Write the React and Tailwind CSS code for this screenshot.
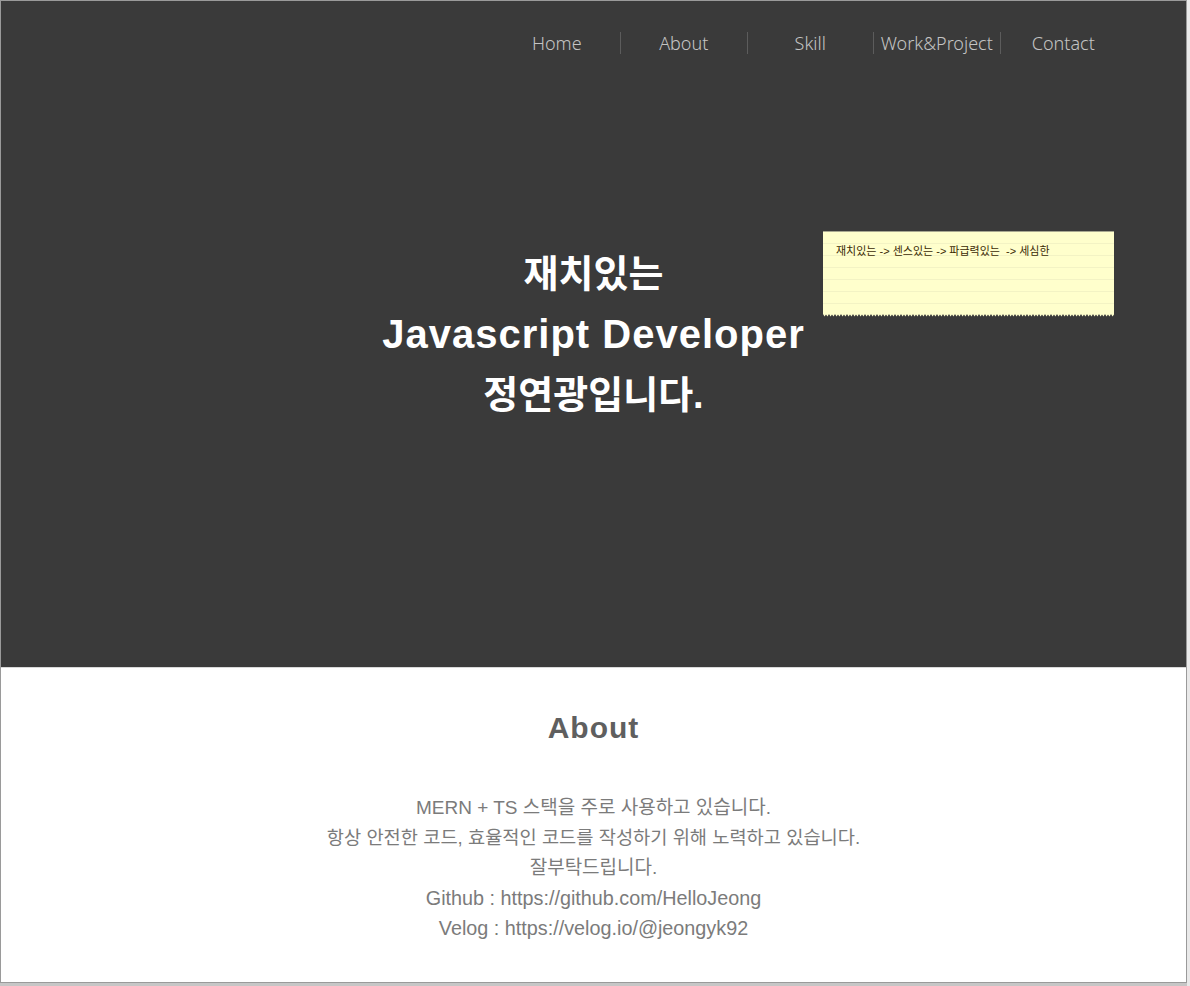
import React from 'react';

const navItems = ['Home', 'About', 'Skill', 'Work&Project', 'Contact'];

function Note() {
  return (
    <div className="absolute left-[822px] top-[230px] w-[291px]">
      <div className="h-[82px] border-t border-[#a8a890] bg-[#ffffcc] bg-[repeating-linear-gradient(to_bottom,transparent_0px,transparent_11px,#f3f3c4_11px,#f3f3c4_12px)] px-[13px] pt-[12px] text-[11px] leading-[14px] text-[#3b2a05] font-['Liberation_Sans','Noto_Sans_CJK_KR',sans-serif]">
        재치있는 -&gt; 센스있는 -&gt; 파급력있는 &nbsp;-&gt; 세심한
      </div>
      <svg width="291" height="4" viewBox="0 0 291 4" className="block">
        <defs>
          <pattern id="zig" width="6" height="4" patternUnits="userSpaceOnUse">
            <path d="M0 0 H6 V1 L4.5 3.5 L3 1.5 L1.5 3.5 L0 1 Z" fill="#ffffcc" />
          </pattern>
        </defs>
        <rect width="291" height="4" fill="url(#zig)" />
      </svg>
    </div>
  );
}

export default function App() {
  return (
    <div className="w-[1190px] h-[986px] bg-[#e9e9e9] overflow-hidden">
      <div className="w-[1187px] h-[983px] border border-[#9a9a9a] bg-white flex flex-col">
        <section className="relative h-[666px] bg-[#3a3a3a] flex flex-col">
          <nav className="flex justify-end pr-[60px] pt-[31px]">
            {navItems.map((item, i) => (
              <div
                key={item}
                className={`w-[126.5px] h-[22px] flex items-center justify-center text-[18px] font-light text-[#c4c4c4] font-['Noto_Sans','Open_Sans',sans-serif] ${i > 0 ? 'border-l border-[#5c5c5c]' : ''}`}
              >
                {item}
              </div>
            ))}
          </nav>
          <div className="flex-1 flex items-center justify-center -mt-[53px]">
            <h1 className="text-center text-white font-bold text-[40px] leading-[60px] tracking-[1px] font-['Liberation_Sans','Noto_Sans_CJK_KR',sans-serif]">
              <span className="text-[38px] tracking-[0px]">재치있는</span>
              <br />
              Javascript Developer
              <br />
              <span className="text-[38px] tracking-[0px]">정연광입니다.</span>
            </h1>
          </div>
          <Note />
        </section>
        <section className="flex-1 border-t border-[#d8d8d8] flex flex-col items-center pt-[40px] font-['Liberation_Sans','Noto_Sans_CJK_KR',sans-serif]">
          <h2 className="text-[30px] font-bold tracking-[1px] leading-[40px] text-[#5f5f5f]">About</h2>
          <div className="mt-[45px] text-center text-[19px] leading-[30px] text-[#7b7b7b]">
            <p>MERN + TS 스택을 주로 사용하고 있습니다.</p>
            <p className="text-[18.7px]">항상 안전한 코드, 효율적인 코드를 작성하기 위해 노력하고 있습니다.</p>
            <p>잘부탁드립니다.</p>
            <p className="text-[19.8px]">Github : https://github.com/HelloJeong</p>
            <p className="text-[19.8px]">Velog : https://velog.io/@jeongyk92</p>
          </div>
        </section>
      </div>
      <div className="h-[3px] w-[1187px] bg-[#c6c6c6]" />
    </div>
  );
}
